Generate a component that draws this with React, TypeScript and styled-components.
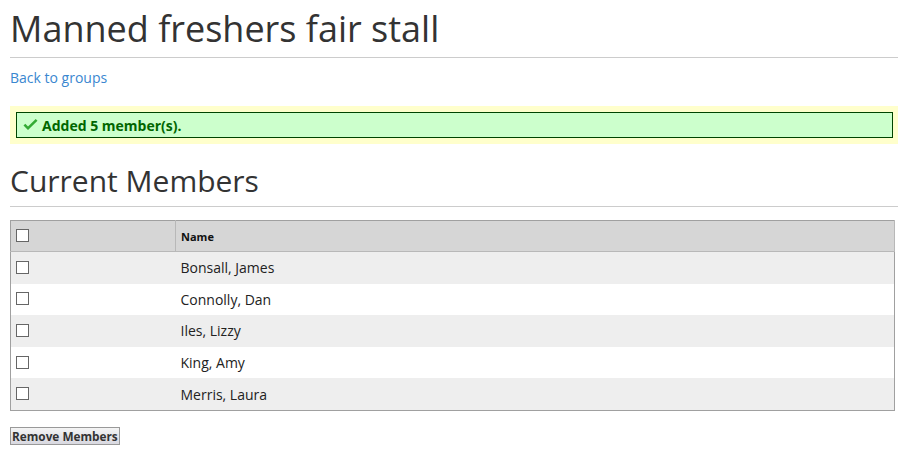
import React from "react";
import styled, { createGlobalStyle } from "styled-components";

const GlobalStyle = createGlobalStyle`
body {
    margin: 0;
    padding: 0 14px 0 10px;
    background: #fff;
    font-family: "Open Sans", "Liberation Sans", sans-serif;
    color: #333;
}
`

const PageTitle = styled.h1`
margin: 0;
padding: 9px 0 8px;
font-size: 36px;
font-weight: 400;
line-height: 40px;
color: #333;
border-bottom: 1px solid #ccc;
`

const BackLink = styled.a`
display: inline-block;
margin-top: 10px;
font-size: 14px;
line-height: 20px;
color: #3a87d0;
text-decoration: none;
`

const FlashOuter = styled.div`
margin-top: 18px;
padding: 6px 5px 6px 6px;
background: #ffffcc;
`

const FlashInner = styled.div`
display: flex;
align-items: center;
gap: 4px;
height: 24px;
padding: 0 6px;
background: #ccffcc;
border: 1px solid #004400;
color: #006600;
font-size: 14px;
font-weight: 700;
`

const SectionTitle = styled.h2`
margin: 20px 0 0;
padding-bottom: 8px;
font-size: 30px;
font-weight: 400;
line-height: 34px;
color: #333;
border-bottom: 1px solid #ccc;
`

const MembersTable = styled.table`
margin-top: 13px;
width: calc(100% - 3px);
border-collapse: collapse;
border: 1px solid #a0a0a0;
font-size: 14px;
`

const HeadCell = styled.th<{ $w?: string }>`
height: 30px;
padding: 0 5px;
text-align: left;
font-size: 11px;
font-weight: 700;
color: #111;
background: #d6d6d6;
border-bottom: 1px solid #b8b8b8;
border-right: 1px solid #b8b8b8;
width: ${p => p.$w || "auto"};
`

const Row = styled.tr<{ $odd: boolean }>`
background: ${p => (p.$odd ? "#eeeeee" : "#ffffff")};
`

const Cell = styled.td`
height: 31.6px;
padding: 0 5px;
color: #222;
`

const Box = styled.span`
display: block;
width: 11px;
height: 11px;
border: 1px solid #666;
background: #fff;
margin-top: -1px;
`

const RemoveButton = styled.button`
margin-top: 16px;
padding: 0 1px;
height: 18px;
font-family: "Open Sans", "Liberation Sans", sans-serif;
font-size: 11.8px;
font-weight: 700;
color: #333;
border: 1px solid #999;
background: linear-gradient(#f4f4f4, #d8d8e0);
cursor: pointer;
`

const members = ["Bonsall, James", "Connolly, Dan", "Iles, Lizzy", "King, Amy", "Merris, Laura"];

const Check = () => (
    <svg width="15" height="12" viewBox="0 0 15 12">
        <path d="M0.5 6.5 L5 11 L14.5 1.8 L12.7 0 L5 7.5 L2.3 4.7 Z" fill="#33aa33" />
    </svg>
)

export default function App() {
    return (
        <>
            <GlobalStyle />
            <PageTitle>Manned freshers fair stall</PageTitle>
            <BackLink href="#">Back to groups</BackLink>
            <FlashOuter>
                <FlashInner>
                    <Check />
                    Added 5 member(s).
                </FlashInner>
            </FlashOuter>
            <SectionTitle>Current Members</SectionTitle>
            <MembersTable>
                <thead>
                    <tr>
                        <HeadCell $w="154px"><Box /></HeadCell>
                        <HeadCell>Name</HeadCell>
                    </tr>
                </thead>
                <tbody>
                    {members.map((m, i) => (
                        <Row key={m} $odd={i % 2 === 0}>
                            <Cell><Box /></Cell>
                            <Cell>{m}</Cell>
                        </Row>
                    ))}
                </tbody>
            </MembersTable>
            <RemoveButton>Remove Members</RemoveButton>
        </>
    )
}
